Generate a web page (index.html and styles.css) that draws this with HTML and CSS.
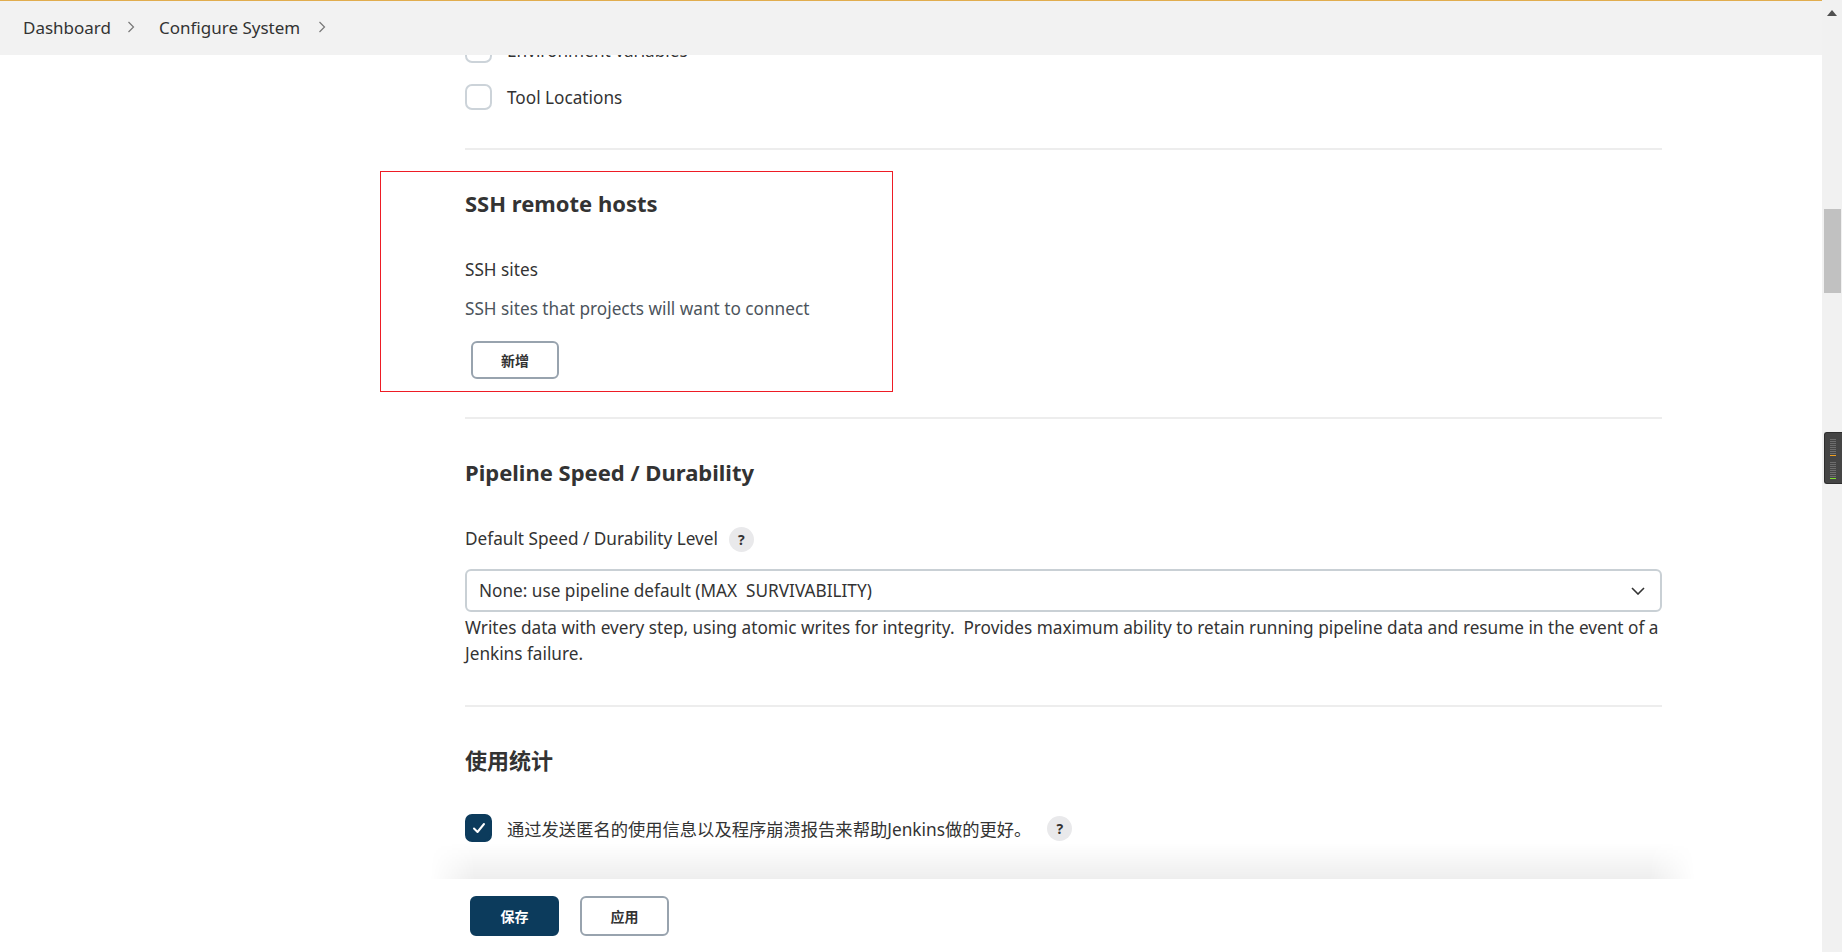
FILE: index.html
```html
<!DOCTYPE html>
<html lang="zh-CN">
<head>
<meta charset="utf-8">
<title>Configure System [Jenkins]</title>
<link rel="stylesheet" href="styles.css">
</head>
<body>
<div class="window">
  <div class="page">
    <header class="topbar">
      <nav class="breadcrumbs">
        <span class="crumb">Dashboard</span>
        <svg class="crumb-sep" width="8" height="12" viewBox="0 0 8 12"><path d="M1.5 1 L6.5 6 L1.5 11" fill="none" stroke="#777" stroke-width="1.2"/></svg>
        <span class="crumb">Configure System</span>
        <svg class="crumb-sep last" width="8" height="12" viewBox="0 0 8 12"><path d="M1.5 1 L6.5 6 L1.5 11" fill="none" stroke="#777" stroke-width="1.2"/></svg>
      </nav>
    </header>

    <div class="scroller">
      <main class="content">
        <div class="options">
          <label class="check-row">
            <span class="checkbox"></span>
            <span class="check-label">Environment variables</span>
          </label>
          <label class="check-row">
            <span class="checkbox"></span>
            <span class="check-label">Tool Locations</span>
          </label>
        </div>

        <section class="section section-ssh">
          <div class="annotation"></div>
          <h2 class="section-title">SSH remote hosts</h2>
          <div class="field-label">SSH sites</div>
          <div class="field-help">SSH sites that projects will want to connect</div>
          <button class="btn btn-outline btn-add">新增</button>
        </section>

        <section class="section">
          <h2 class="section-title">Pipeline Speed / Durability</h2>
          <div class="field-label with-help">
            <span>Default Speed / Durability Level</span>
            <span class="help">?</span>
          </div>
          <div class="select">
            <span class="select-value">None: use pipeline default (MAX&nbsp; SURVIVABILITY)</span>
            <svg class="select-arrow" width="14" height="8" viewBox="0 0 14 8"><path d="M1 1 L7 7 L13 1" fill="none" stroke="#333" stroke-width="1.6"/></svg>
          </div>
          <p class="field-desc">Writes data with every step, using atomic writes for integrity.&nbsp; Provides maximum ability to retain running pipeline data and resume in the event of a Jenkins failure.</p>
        </section>

        <section class="section">
          <h2 class="section-title">使用统计</h2>
          <label class="check-row usage">
            <span class="checkbox checked">
              <svg width="14" height="12" viewBox="0 0 14 12"><path d="M2 6.5 L5.5 10 L12 2" fill="none" stroke="#fff" stroke-width="2" stroke-linecap="round" stroke-linejoin="round"/></svg>
            </span>
            <span class="check-label cjk">通过发送匿名的使用信息以及程序崩溃报告来帮助Jenkins做的更好。</span>
            <span class="help help-far">?</span>
          </label>
        </section>
      </main>
    </div>

    <footer class="bottom-bar">
      <div class="bottom-shade"></div>
      <div class="bottom-actions">
        <button class="btn btn-primary">保存</button>
        <button class="btn btn-outline">应用</button>
      </div>
    </footer>
  </div>

  <div class="scrollbar">
    <svg class="scroll-arrow" width="10" height="6" viewBox="0 0 10 6"><path d="M5 0 L10 6 L0 6 Z" fill="#505050"/></svg>
    <div class="scroll-thumb"></div>
  </div>

  <div class="meter">
    <svg width="18" height="52" viewBox="0 0 18 52">
      <g stroke="#6e6e6e" stroke-width="1">
        <path d="M6 7.5h6M6 9.5h6M6 11.5h6M6 13.5h6M6 15.5h6M6 17.5h6M6 19.5h6M6 21.5h6"/>
        <path d="M6 30.5h6M6 32.5h6M6 34.5h6M6 36.5h6M6 38.5h6M6 40.5h6M6 42.5h6M6 44.5h6"/>
      </g>
      <path d="M6 23.5h6" stroke="#f0a020" stroke-width="1"/>
      <path d="M6 46.5h6" stroke="#7ee030" stroke-width="1"/>
    </svg>
  </div>
</div>
</body>
</html>
```

FILE: styles.css
```css
* { box-sizing: border-box; }

html, body {
  margin: 0;
  padding: 0;
}

body {
  font-family: "Noto Sans", "Noto Sans CJK SC", sans-serif;
  font-size: 17.2px;
  color: #333;
  background: #fff;
}

.window {
  position: relative;
  display: flex;
  width: 1842px;
  height: 952px;
  overflow: hidden;
}

.page {
  flex: 1;
  min-width: 0;
  display: flex;
  flex-direction: column;
}

/* ---------- header ---------- */
.topbar {
  flex: none;
  height: 55px;
  background: #f2f2f2;
  border-top: 1px solid #e1ad4e;
  display: flex;
  align-items: center;
  padding-left: 23px;
  padding-bottom: 2px;
}

.breadcrumbs {
  display: flex;
  align-items: center;
}

.crumb {
  font-size: 17px;
  color: #333;
}

.crumb-sep {
  margin: 0 24px 0 16px;
}

.crumb-sep.last {
  margin-left: 18px;
}

/* ---------- content ---------- */
.scroller {
  flex: 1;
  min-height: 0;
  overflow: hidden;
}

.content {
  width: 1197px;
  margin-left: 465px;
}

.options {
  margin-top: -18px;
  padding-bottom: 38px;
  display: flex;
  flex-direction: column;
  gap: 21px;
}

.check-row {
  display: flex;
  align-items: center;
  height: 26px;
}

.checkbox {
  flex: none;
  width: 27px;
  height: 26px;
  border: 2px solid #ccd3d9;
  border-radius: 7px;
  margin-right: 15px;
  background: #fff;
  display: flex;
  align-items: center;
  justify-content: center;
}

.checkbox.checked {
  height: 28px;
  background: #0c3b5c;
  border-color: #0c3b5c;
}

.check-label {
  font-size: 17.2px;
  color: #333;
}

.check-label.cjk {
  font-size: 17.3px;
}

.section {
  position: relative;
  border-top: 2px solid #ededed;
  padding-top: 38px;
  padding-bottom: 38px;
}

.section:last-child {
  padding-bottom: 0;
}

.annotation {
  position: absolute;
  left: -85px;
  top: 21px;
  width: 513px;
  height: 221px;
  border: 1px solid #ee1c25;
  pointer-events: none;
}

.section-title {
  margin: 0 0 39px;
  font-size: 22px;
  line-height: 30px;
  font-weight: 700;
  color: #333;
}

.field-label {
  font-size: 17.2px;
  line-height: 26px;
  color: #333;
}

.field-label.with-help {
  display: flex;
  align-items: center;
}

.field-help {
  margin-top: 13px;
  font-size: 17.2px;
  line-height: 26px;
  color: #4c545c;
}

.help {
  flex: none;
  width: 25px;
  height: 25px;
  border-radius: 50%;
  background: #e9e9eb;
  color: #333;
  font-size: 14px;
  font-weight: 700;
  line-height: 25px;
  text-align: center;
  margin-left: 11px;
}

.help-far {
  margin-left: 16px;
}

.select {
  margin-top: 17px;
  height: 43px;
  border: 2px solid #c9d0d5;
  border-radius: 6px;
  display: flex;
  align-items: center;
  justify-content: space-between;
  padding: 0 15px 0 12px;
}

.select-value {
  font-size: 17.2px;
  color: #333;
}

.field-desc {
  margin: 3px 0 0;
  font-size: 17.2px;
  line-height: 26px;
  color: #333;
}

.usage {
  height: 28px;
}

/* ---------- buttons ---------- */
.btn {
  font-family: "Noto Sans", "Noto Sans CJK SC", sans-serif;
  font-size: 14px;
  font-weight: 700;
  height: 38px;
  width: 88px;
  border-radius: 6px;
  cursor: pointer;
}

.btn-outline {
  background: #fff;
  border: 2px solid #98a3ae;
  color: #333;
}

.btn-add {
  margin-top: 19px;
  margin-left: 6px;
  display: block;
}

.btn-primary {
  background: #0c3b5c;
  border: 2px solid #0c3b5c;
  color: #fff;
}

/* ---------- bottom bar ---------- */
.bottom-bar {
  position: relative;
  flex: none;
  height: 73px;
  background: #fff;
}

.bottom-shade {
  position: absolute;
  left: 430px;
  width: 1265px;
  bottom: 100%;
  height: 36px;
  background: linear-gradient(to bottom, rgba(0,0,0,0), rgba(0,0,0,0.065));
  -webkit-mask-image: linear-gradient(to right, transparent, #000 45px, #000 calc(100% - 45px), transparent);
  mask-image: linear-gradient(to right, transparent, #000 45px, #000 calc(100% - 45px), transparent);
}

.bottom-actions {
  display: flex;
  gap: 21px;
  padding: 17px 0 0 470px;
}

.bottom-actions .btn {
  height: 40px;
  width: 89px;
}

/* ---------- scrollbar ---------- */
.scrollbar {
  flex: none;
  width: 20px;
  background: #f1f1f1;
  display: flex;
  flex-direction: column;
  align-items: center;
}

.scroll-arrow {
  margin-top: 10px;
}

.scroll-thumb {
  margin-top: 193px;
  width: 17px;
  height: 84px;
  background: #c1c1c1;
  margin-left: 1px;
}

.meter {
  position: absolute;
  right: 0;
  top: 432px;
  width: 18px;
  height: 52px;
  background: #454545;
  border: 1px solid #2e2e2e;
  border-right: none;
  border-radius: 3px 0 0 3px;
  display: flex;
}

.meter svg {
  display: block;
  margin: -1px 0 0 -1px;
}
```
